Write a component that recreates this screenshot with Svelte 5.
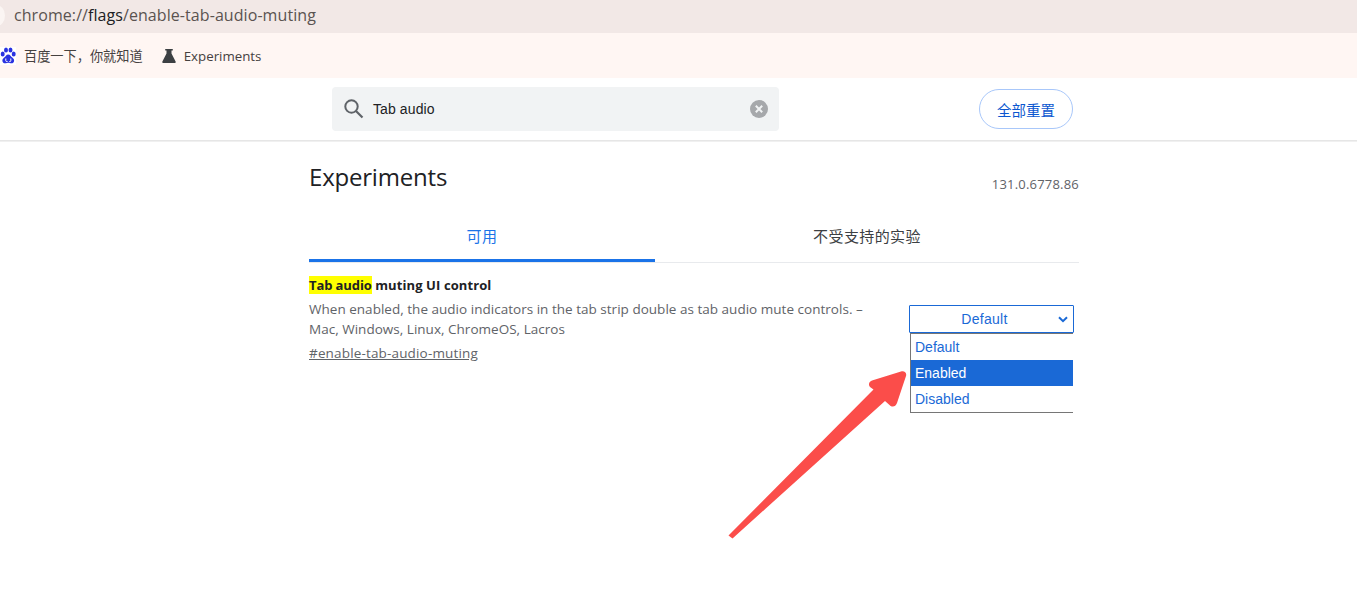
<script>
  const options = ['Default', 'Enabled', 'Disabled'];
</script>

<div class="page">
  <div class="urlbar">
    <span class="pill"></span>
    <span class="url">chrome://<span class="dark">flags</span>/enable-tab-audio-muting</span>
  </div>
  <div class="bookmarks">
    <svg class="paw" viewBox="0 0 16 18" width="16" height="18">
      <rect width="16" height="18" fill="#fff"/>
      <g fill="#2932e1">
        <ellipse cx="2.700" cy="7" rx="2" ry="2.500"/>
        <ellipse cx="6" cy="3" rx="2" ry="2.500"/>
        <ellipse cx="10.500" cy="3" rx="2" ry="2.500"/>
        <ellipse cx="13.700" cy="7" rx="2" ry="2.500"/>
        <path d="M8.200 7.400c-2 0-2.600 2-4 3.100-1.500 1.200-2.100 2.500-1.700 3.900.5 1.700 2.200 2.100 3.200 1.800 1-.2 1.700-.4 2.600-.4s1.600.2 2.500.4c1.100.3 2.700-.1 3.200-1.800.4-1.400-.2-2.700-1.700-3.900-1.400-1.100-2-3.100-4.100-3.100z"/>
      </g>
      <path d="M5.800 11.500v2.200c0 .6.500.9 1 .9h.8M10.800 11.500v2.300c0 .5-.4.800-.9.800h-.7" fill="none" stroke="#fff" stroke-width="1"/>
    </svg>
    <span class="bm cjk one">百度一下，你就知道</span>
    <svg class="flask" viewBox="0 0 16 16" width="16" height="16">
      <path d="M4.200 1h7.600v1.600h-1.300v3l4.100 7.800c.4.800-.1 1.600-.9 1.600H2.300c-.8 0-1.300-.8-.9-1.600l4.100-7.800v-3H4.200z" fill="#3c4043"/>
    </svg>
    <span class="bm">Experiments</span>
  </div>

  <header class="header">
    <div class="search">
      <svg viewBox="0 0 24 24" width="24" height="24">
        <circle cx="9.500" cy="9.500" r="6.200" fill="none" stroke="#5f6368" stroke-width="2"/>
        <path d="M14 14l6.500 6.500" stroke="#5f6368" stroke-width="2.200" fill="none"/>
      </svg>
      <span class="query">Tab audio</span>
      <svg class="clear" viewBox="0 0 18 18" width="18" height="18">
        <circle cx="9" cy="9" r="9" fill="#a6a8ab"/>
        <path d="M5.800 5.800l6.400 6.400M12.200 5.800l-6.400 6.400" stroke="#f1f3f4" stroke-width="2"/>
      </svg>
    </div>
    <button class="reset cjk">全部重置</button>
  </header>

  <main class="main">
    <div class="titlerow">
      <h1>Experiments</h1>
      <span class="version">131.0.6778.86</span>
    </div>
    <div class="tabs cjk">
      <div class="tab active">可用</div>
      <div class="tab">不受支持的实验</div>
    </div>
    <div class="flag">
      <div class="info">
        <h2><mark>Tab audio</mark> muting UI control</h2>
        <p>When enabled, the audio indicators in the tab strip double as tab audio mute controls. – Mac, Windows, Linux, ChromeOS, Lacros</p>
        <a href="#enable-tab-audio-muting">#enable-tab-audio-muting</a>
      </div>
      <div class="control">
        <div class="select">
          <span>Default</span>
          <svg viewBox="0 0 10 7" width="10" height="7"><path d="M1 1.200l4 4 4-4" fill="none" stroke="#1a69d6" stroke-width="2"/></svg>
        </div>
        <ul class="menu">
          {#each options as o}
            <li class:selected={o === 'Enabled'}>{o}</li>
          {/each}
        </ul>
      </div>
    </div>
  </main>

  <svg class="arrow" viewBox="0 0 210 190" width="210" height="190">
    <path d="M8.500 175.500 L153.500 29.500 L150 27 C148 25 149 21.500 152 20.500 L181 11.500 C184.500 10.500 187 13 186 16 L177 43 C175.500 47 172 47.500 169.500 45 L165 41 L12.500 178.500 Z" fill="#fb4d4a"/>
  </svg>
</div>

<style>
  :global(body) { margin: 0; background: #fff; }
  .page {
    position: relative;
    height: 594px;
    overflow: hidden;
    font-family: "Open Sans", "Noto Sans CJK SC", sans-serif;
    color: #202124;
  }
  .cjk { font-family: "Noto Sans CJK SC", "Open Sans", sans-serif; }
  .urlbar {
    height: 33px;
    background: #f2e8e6;
    display: flex;
    align-items: center;
    position: relative;
    padding-left: 14px;
  }
  .pill {
    position: absolute;
    left: -12px;
    top: 5px;
    width: 17px;
    height: 21px;
    border-radius: 50%;
    background: #fbf5f3;
  }
  .url { font-size: 16px; color: #5a5350; margin-top: -4px; letter-spacing: 0.07px; white-space: nowrap; }
  .dark { color: #202124; }
  .bookmarks {
    height: 45px;
    background: #fff6f3;
    display: flex;
    align-items: center;
    font-size: 13.300px;
    color: #45413f;
  }
  .paw { margin-right: 8px; }
  .bm { white-space: nowrap; }
  .bm.one { font-size: 13.200px; }
  .flask { margin-left: 18px; margin-right: 7px; }
  .header {
    height: 62px;
    display: flex;
    align-items: flex-start;
    box-shadow: 0 1px 0 #e6e6e6, 0 2px 0 #f0f0f0;
    position: relative;
    box-sizing: border-box;
    padding: 9px 0 0 332px;
  }
  .search {
    width: 447px;
    height: 44px;
    box-sizing: border-box;
    background: #f1f3f4;
    border-radius: 4px;
    display: flex;
    align-items: center;
    padding: 0 11px 0 10px;
  }
  .query {
    font-family: "Liberation Sans", sans-serif;
    font-size: 14px;
    letter-spacing: 0.1px;
    margin-left: 7px;
    flex: 1;
  }
  .reset {
    margin: 2px 0 0 200px;
    width: 94px;
    height: 40px;
    border-radius: 20px;
    border: 1px solid #a8c7fa;
    background: #fff;
    color: #0b57d0;
    font-size: 14.500px;
    padding: 0;
  }
  .main {
    width: 770px;
    margin-left: 309px;
  }
  .titlerow {
    display: flex;
    justify-content: space-between;
    height: 78px;
    box-sizing: border-box;
  }
  h1 {
    margin: 18px 0 0;
    font-size: 24px;
    line-height: 38px;
    font-weight: 400;
    letter-spacing: -0.2px;
    color: #202124;
  }
  .version { font-size: 13px; letter-spacing: 0.2px; color: #5f6368; margin-top: 35px; }
  .tabs {
    display: grid;
    grid-template-columns: 346px 1fr;
    height: 44px;
    border-bottom: 1px solid #e8eaed;
    box-sizing: content-box;
  }
  .tab {
    text-align: center;
    font-size: 15px;
    letter-spacing: 0.4px;
    line-height: 36px;
    color: #3c4043;
  }
  .tab.active {
    color: #1a73e8;
    border-bottom: 3px solid #1a73e8;
    border-radius: 2px 2px 0 0;
    height: 41px;
  }
  .flag {
    display: flex;
    justify-content: space-between;
    padding-top: 12px;
  }
  .info { width: 570px; }
  h2 {
    margin: 0;
    font-size: 13px;
    line-height: 20px;
    font-weight: 700;
    letter-spacing: 0.1px;
    color: #202124;
  }
  mark { background: #ffff00; color: inherit; letter-spacing: -0.1px; }
  p {
    margin: 4px 0 0;
    font-size: 13.500px;
    letter-spacing: 0.02px;
    line-height: 20px;
    color: #5f6368;
    width: 560px;
  }
  a {
    display: inline-block;
    margin-top: 4px;
    font-size: 13.500px;
    letter-spacing: 0.16px;
    line-height: 20px;
    color: #5f6368;
  }
  .control {
    width: 165px;
    margin: 30px 5px 0 0;
    font-family: "Liberation Sans", sans-serif;
    font-size: 14px;
    color: #1a69d6;
  }
  .select {
    height: 28px;
    box-sizing: border-box;
    border: 1px solid #1a69d6;
    border-radius: 1px;
    display: flex;
    align-items: center;
    justify-content: center;
    padding-right: 14px;
    letter-spacing: 0.3px;
    position: relative;
  }
  .select svg { position: absolute; right: 5px; top: 10px; }
  .menu {
    list-style: none;
    margin: 0 0 0 1px;
    padding: 0;
    width: 163px;
    box-sizing: border-box;
    border-left: 1px solid #767676;
    border-top: 1px solid #767676;
    border-bottom: 1px solid #767676;
    height: 80px;
  }
  .menu li { height: 26px; line-height: 26px; padding-left: 4px; }
  .menu li.selected { background: #1a69d6; color: #fff; }
  .arrow { position: absolute; left: 720px; top: 360px; }
</style>
